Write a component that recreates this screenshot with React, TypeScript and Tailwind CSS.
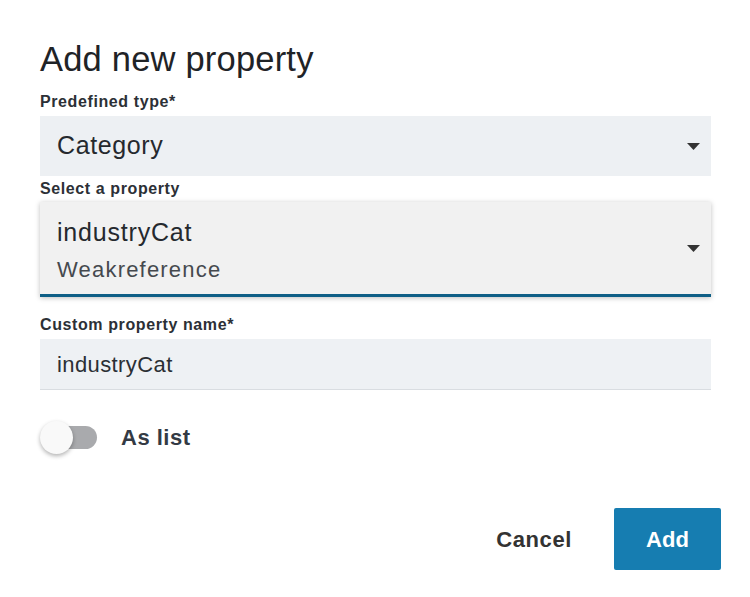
const font = "font-['Liberation_Sans',Arial,sans-serif]";

function Caret() {
  return (
    <svg width="13" height="7" viewBox="0 0 13 7" className="shrink-0">
      <path d="M0 0h13L6.5 7z" fill="#333" />
    </svg>
  );
}

export default function App() {
  return (
    <div className={`w-[750px] h-[597px] bg-white text-[#22262b] ${font}`}>
      <div className="flex flex-col px-10 pt-[38px]">
        <h1 className="text-[34.5px] leading-[42px] tracking-[0.2px] text-[#1f2327]">Add new property</h1>

        <label className="mt-[13px] text-[16px] font-bold leading-[18px] tracking-[0.6px] text-[#2c3036]">Predefined type*</label>
        <div className="mt-[5px] flex h-[60px] w-[671px] items-center justify-between bg-[#edf0f3] pl-[17px] pr-[11px]">
          <span className="text-[25px] tracking-[0.6px] text-[#25292e]">Category</span>
          <Caret />
        </div>

        <label className="mt-[4px] text-[16px] font-bold leading-[18px] tracking-[0.6px] text-[#2c3036]">Select a property</label>
        <div className="mt-[4px] flex h-[95px] w-[671px] items-center justify-between border-b-[3px] border-[#0f5f86] bg-[#f1f1f1] pl-[17px] pr-[11px] shadow-[0_1px_5px_rgba(0,0,0,0.25)]">
          <div className="flex flex-col self-start pt-[11px]">
            <span className="text-[25px] leading-[38px] tracking-[0.8px] text-[#25292e]">industryCat</span>
            <span className="text-[22px] leading-[38px] tracking-[1.2px] text-[#45494e]">Weakreference</span>
          </div>
          <Caret />
        </div>

        <label className="mt-[19px] text-[16px] font-bold leading-[18px] tracking-[0.6px] text-[#2c3036]">Custom property name*</label>
        <div className="mt-[5px] flex h-[51px] w-[671px] items-center border-b border-[#d9dde1] bg-[#eef1f4] pl-[17px]">
          <span className="text-[22px] tracking-[0.4px] text-[#2b2f34]">industryCat</span>
        </div>

        <div className="mt-[31px] flex items-center">
          <div className="relative h-[33px] w-[57px]">
            <div className="absolute left-[2px] top-[5px] h-[23px] w-[55px] rounded-full bg-[#a9aaad]" />
            <div className="absolute left-0 top-0 h-[33px] w-[33px] rounded-full bg-[#f9f9f9] shadow-[0_2px_4px_rgba(0,0,0,0.3)]" />
          </div>
          <span className="ml-[24px] text-[22px] font-bold tracking-[0.5px] text-[#333a44]">As list</span>
        </div>

        <div className="mt-[54px] flex w-[681px] items-center justify-end">
          <button className="mr-[42px] text-[22px] font-bold tracking-[0.6px] text-[#333]">Cancel</button>
          <button className="h-[62px] w-[107px] rounded-[2px] bg-[#167db1] text-[22px] font-bold text-white">Add</button>
        </div>
      </div>
    </div>
  );
}
